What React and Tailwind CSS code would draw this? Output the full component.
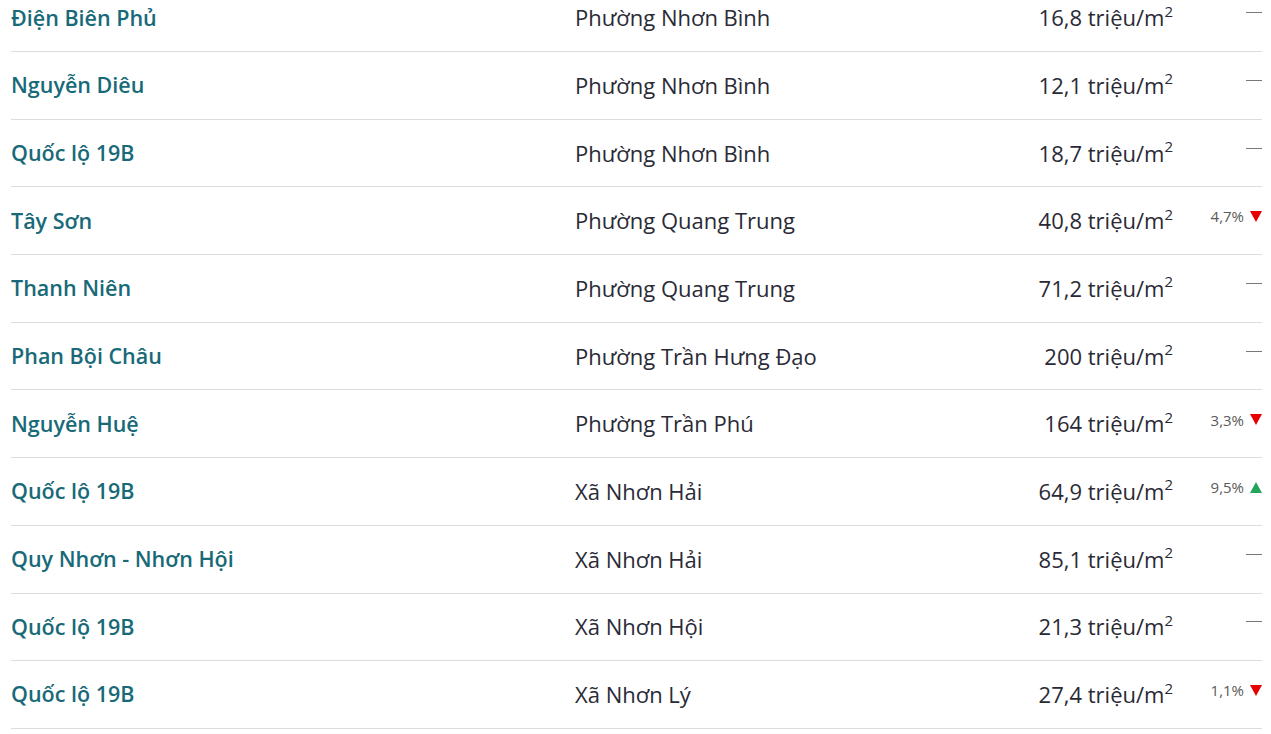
const rows = [
  { street: "Điện Biên Phủ", ward: "Phường Nhơn Bình", price: "16,8 triệu/m", change: null },
  { street: "Nguyễn Diêu", ward: "Phường Nhơn Bình", price: "12,1 triệu/m", change: null },
  { street: "Quốc lộ 19B", ward: "Phường Nhơn Bình", price: "18,7 triệu/m", change: null },
  { street: "Tây Sơn", ward: "Phường Quang Trung", price: "40,8 triệu/m", change: { v: "4,7%", up: false } },
  { street: "Thanh Niên", ward: "Phường Quang Trung", price: "71,2 triệu/m", change: null },
  { street: "Phan Bội Châu", ward: "Phường Trần Hưng Đạo", price: "200 triệu/m", change: null },
  { street: "Nguyễn Huệ", ward: "Phường Trần Phú", price: "164 triệu/m", change: { v: "3,3%", up: false } },
  { street: "Quốc lộ 19B", ward: "Xã Nhơn Hải", price: "64,9 triệu/m", change: { v: "9,5%", up: true } },
  { street: "Quy Nhơn - Nhơn Hội", ward: "Xã Nhơn Hải", price: "85,1 triệu/m", change: null },
  { street: "Quốc lộ 19B", ward: "Xã Nhơn Hội", price: "21,3 triệu/m", change: null },
  { street: "Quốc lộ 19B", ward: "Xã Nhơn Lý", price: "27,4 triệu/m", change: { v: "1,1%", up: false } },
];

const Triangle = ({ up }) => (
  <svg width="12" height="11" viewBox="0 0 12 11" className="ml-[6px]">
    {up ? (
      <polygon points="6,0 12,11 0,11" fill="#22a55a" />
    ) : (
      <polygon points="0,0 12,0 6,11" fill="#e60000" />
    )}
  </svg>
);

export default function App() {
  return (
    <div
      className="min-h-screen bg-white pl-[11px] pr-[9px] overflow-hidden"
      style={{ fontFamily: "'Open Sans', 'Noto Sans', sans-serif" }}
    >
      <div className="-mt-[15.7px]">
        {rows.map((row, i) => (
          <div
            key={i}
            className="grid grid-cols-[564px_1fr_200px_89px] items-center h-[67.7px] border-b border-[#dcdcdc]"
          >
            <a className="text-[21.5px] font-semibold text-[#186a78] whitespace-nowrap">
              {row.street}
            </a>
            <span className="text-[22px] text-[#2a2a36] whitespace-nowrap">{row.ward}</span>
            <span className="text-[22px] text-[#2a2a36] text-right whitespace-nowrap">
              {row.price}
              <sup className="text-[15px] align-[2px]">2</sup>
            </span>
            <div className="flex items-center justify-end mb-[8px]">
              {row.change ? (
                <>
                  <span className="text-[15px] text-[#5a5a5a]">{row.change.v}</span>
                  <Triangle up={row.change.up} />
                </>
              ) : (
                <span className="block w-[16px] h-px bg-[#777] mb-[2px]" />
              )}
            </div>
          </div>
        ))}
      </div>
    </div>
  );
}
